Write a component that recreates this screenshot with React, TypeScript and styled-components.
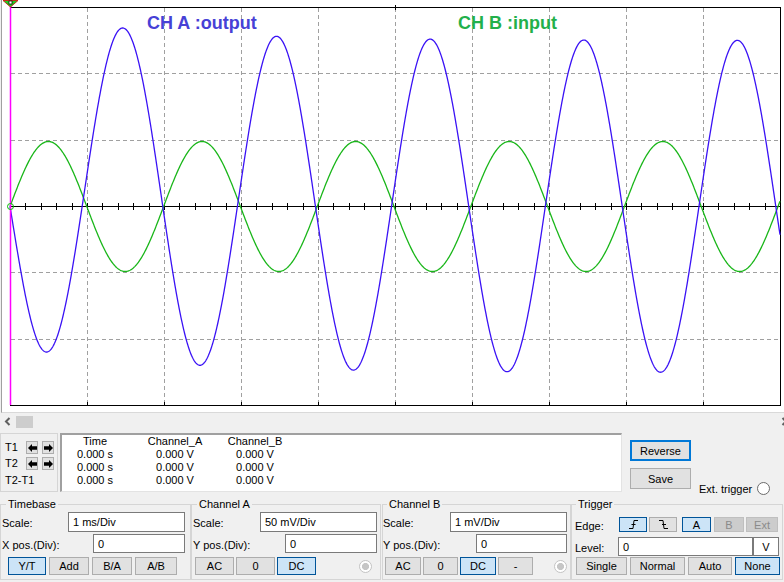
import React from "react";
import styled, { createGlobalStyle } from "styled-components";

const GlobalStyle = createGlobalStyle`
  html, body { margin: 0; padding: 0; background: #f0f0f0; }
  body {
    font-family: "Liberation Sans", Arial, sans-serif;
    font-size: 11px;
    color: #000;
  }
  * { box-sizing: border-box; }
`;

const FONT = `"Liberation Sans", Arial, sans-serif`;

const Window = styled.div`
  width: 784px;
  height: 582px;
  overflow: hidden;
  background: #f0f0f0;
  display: flex;
  flex-direction: column;
`;

/* ---------- scope screen ---------- */

const Screen = styled.div`
  position: relative;
  flex: none;
  height: 413px;
  margin-left: 1px;
  border-left: 1px solid #a0a0a0;
  border-bottom: 1px solid #d9d9d9;
  background: #ffffff;
`;

const ScopeSvg = styled.svg`
  display: block;
`;

const TraceLabel = styled.span<{ $left: number; $color: string }>`
  position: absolute;
  top: 14px;
  left: ${(p) => p.$left - 2}px;
  font: bold 18px/18px ${FONT};
  color: ${(p) => p.$color};
  white-space: nowrap;
`;

const PERIOD = 153.6;

function wavePath(fn: (x: number) => number): string {
  const parts: string[] = [];
  for (let x = 10; x <= 780.001; x += 0.5) {
    parts.push(`${parts.length ? "L" : "M"}${x.toFixed(1)} ${fn(x).toFixed(2)}`);
  }
  return parts.join(" ");
}

const greenWave = (x: number) =>
  206.5 - 65 * Math.sin((2 * Math.PI * (x - 10)) / PERIOD);

const blueWave = (x: number) => {
  const t = x - 10;
  const th = (2 * Math.PI * t) / PERIOD;
  const off = 28 * Math.exp(-t / 140) - 13 * Math.exp(-t / 15);
  return 206.5 - (-166 * Math.sin(th + 0.09) + off);
};

const GREEN_PATH = wavePath(greenWave);
const BLUE_PATH = wavePath(blueWave);

function Scope() {
  const vx = Array.from({ length: 9 }, (_, i) => 10.5 + 77 * (i + 1));
  const hy = [73, 140, 272, 339].map((v) => v + 0.5);
  const ticks = Array.from({ length: 51 }, (_, i) => Math.round(10 + 15.4 * i) + 0.5);
  return (
    <ScopeSvg width={782} height={412} viewBox="2 0 782 412">
      <g stroke="#a0a0a0" strokeDasharray="4 3" shapeRendering="crispEdges">
        {vx.map((x) => (
          <line key={x} x1={x} y1={8} x2={x} y2={405} />
        ))}
        {hy.map((y) => (
          <line key={y} x1={11} y1={y} x2={780} y2={y} />
        ))}
      </g>
      <g stroke="#000" fill="none" shapeRendering="crispEdges">
        <rect x={10.5} y={7.5} width={770} height={398} />
        <line x1={10} y1={206.5} x2={780} y2={206.5} />
        {ticks.map((x) => (
          <line key={x} x1={x} y1={203} x2={x} y2={210} />
        ))}
        {vx.map((x) => (
          <line key={"b" + x} x1={x} y1={402} x2={x} y2={405} />
        ))}
        <line x1={395.5} y1={5} x2={395.5} y2={10} />
      </g>
      <path d={GREEN_PATH} stroke="#19b619" strokeWidth={1.3} fill="none" />
      <path d={BLUE_PATH} stroke="#3a12f5" strokeWidth={1.3} fill="none" />
      <line x1={10.5} y1={5} x2={10.5} y2={405} stroke="#ff00ff" strokeWidth={1.5} />
      <circle cx={10.5} cy={206.5} r={3} stroke="#00c000" strokeWidth={1} fill="none" />
      <polygon points="3,0.5 18,0.5 10.5,7" fill="#22cc22" stroke="#d00000" strokeWidth={0.8} />
      <rect x={9} y={1} width={3} height={3} fill="#fff" stroke="#000" strokeWidth={0.7} />
    </ScopeSvg>
  );
}

/* ---------- scrollbar ---------- */

const ScrollBar = styled.div`
  flex: none;
  height: 18px;
  display: flex;
  align-items: center;
  padding-left: 4px;
`;

const ScrollArrow = styled.svg<{ $end?: boolean }>`
  flex: none;
  display: block;
  margin-right: ${(p) => (p.$end ? "-4px" : "0")};
`;

const ScrollThumb = styled.div`
  flex: none;
  width: 17px;
  height: 12px;
  margin-left: 5px;
  background: #cdcdcd;
`;

const ScrollTrack = styled.div`
  flex: 1;
`;

/* ---------- readout ---------- */

const Readout = styled.div`
  flex: none;
  height: 62px;
  margin-top: 2px;
  display: flex;
  align-items: flex-start;
`;

const CursorPanel = styled.div`
  flex: none;
  width: 58px;
  height: 59px;
  border: 1px solid #d5d5d5;
  padding: 7px 0 0 4px;
  display: flex;
  flex-direction: column;
`;

const CursorRow = styled.div<{ $mt?: number }>`
  display: flex;
  align-items: center;
  height: 13px;
  margin-top: ${(p) => p.$mt ?? 0}px;
`;

const CursorLabel = styled.span`
  width: 21px;
  line-height: 13px;
  white-space: nowrap;
`;

const ArrowButton = styled.div`
  flex: none;
  width: 12px;
  height: 13px;
  border: 1px solid #adadad;
  background: #e1e1e1;
  display: flex;
  align-items: center;
  justify-content: center;
  & + & {
    margin-left: 4px;
  }
`;

const ReadoutTable = styled.div`
  flex: none;
  width: 562px;
  height: 59px;
  margin-left: 2px;
  background: #fff;
  border: 1px solid #e3e3e3;
  border-top: 2px solid #a0a0a0;
  border-left: 2px solid #a0a0a0;
  display: grid;
  grid-template-columns: 66px 94px 66px;
  grid-auto-rows: 13px;
  align-content: start;
  justify-items: center;
  line-height: 13px;
  white-space: nowrap;
`;

const ButtonColumn = styled.div`
  flex: none;
  margin-left: 8px;
  padding-top: 7px;
  display: flex;
  flex-direction: column;
  gap: 7px;
`;

const PushButton = styled.div<{ $focused?: boolean }>`
  width: 61px;
  height: 21px;
  display: flex;
  align-items: center;
  justify-content: center;
  background: #e1e1e1;
  border: ${(p) => (p.$focused ? "2px solid #0078d7" : "1px solid #adadad")};
`;

const ExtTrigger = styled.div`
  flex: none;
  align-self: flex-end;
  margin-left: 8px;
  display: flex;
  align-items: center;
  gap: 5px;
  white-space: nowrap;
`;

const RadioCircle = styled.span<{ $disabled?: boolean; $mr?: number }>`
  flex: none;
  display: block;
  width: 13px;
  height: 13px;
  border-radius: 50%;
  margin-right: ${(p) => p.$mr ?? 0}px;
  border: 1px solid ${(p) => (p.$disabled ? "#c4c4c4" : "#6b6b6b")};
  background: ${(p) =>
    p.$disabled ? "radial-gradient(circle, #c6c6c6 0 3.3px, #ffffff 3.8px)" : "#ffffff"};
`;

/* ---------- control groups ---------- */

const Controls = styled.div`
  flex: none;
  display: flex;
  margin-top: 3px;
`;

const Group = styled.fieldset<{ $w: number; $ml?: number; $pl: number; $pr: number }>`
  flex: none;
  min-width: 0;
  width: ${(p) => p.$w}px;
  height: 82px;
  margin: 0 0 0 ${(p) => p.$ml ?? 0}px;
  padding: 0 ${(p) => p.$pr}px 0 ${(p) => p.$pl}px;
  border: 1px solid #d5d5d5;
`;

const Legend = styled.legend<{ $ml: number }>`
  padding: 0 2px;
  margin-left: ${(p) => p.$ml}px;
  line-height: 13px;
`;

const FieldRow = styled.div<{ $h: number; $mt: number }>`
  display: flex;
  align-items: center;
  height: ${(p) => p.$h}px;
  margin-top: ${(p) => p.$mt}px;
`;

const FieldLabel = styled.span<{ $w?: number }>`
  flex: ${(p) => (p.$w ? "none" : "1")};
  width: ${(p) => (p.$w ? `${p.$w}px` : "auto")};
  padding-top: 2px;
  white-space: nowrap;
`;

const TextBox = styled.div<{ $w: number; $center?: boolean }>`
  flex: none;
  width: ${(p) => p.$w}px;
  height: 100%;
  border: 1px solid #7a7a7a;
  background: #fff;
  padding-left: ${(p) => (p.$center ? 0 : 4)}px;
  display: flex;
  align-items: center;
  justify-content: ${(p) => (p.$center ? "center" : "flex-start")};
  white-space: nowrap;
`;

const ButtonRow = styled.div<{ $pl: number; $gap: number; $mt: number; $h: number }>`
  display: flex;
  align-items: center;
  height: ${(p) => p.$h}px;
  margin-top: ${(p) => p.$mt}px;
  padding-left: ${(p) => p.$pl}px;
  gap: ${(p) => p.$gap}px;
`;

type BtnState = "normal" | "on" | "off";

const ToggleButton = styled.div<{ $w: number; $state?: BtnState; $ml?: number }>`
  flex: none;
  width: ${(p) => p.$w}px;
  height: 100%;
  margin-left: ${(p) => p.$ml ?? 0}px;
  display: flex;
  align-items: center;
  justify-content: center;
  white-space: nowrap;
  background: ${(p) =>
    p.$state === "on" ? "#cce4f7" : p.$state === "off" ? "#cccccc" : "#e1e1e1"};
  border: 1px solid
    ${(p) => (p.$state === "on" ? "#005499" : p.$state === "off" ? "#bfbfbf" : "#adadad")};
  color: ${(p) => (p.$state === "off" ? "#8a8a8a" : "#000")};
`;

const Spacer = styled.div`
  flex: 1;
`;

/* ---------- icons ---------- */

const ArrowIcon = ({ dir }: { dir: "left" | "right" }) => (
  <svg width="9" height="8" viewBox="0 0 9 8" style={dir === "right" ? { transform: "scaleX(-1)" } : undefined}>
    <polygon points="0,4 4,0 4,2.3 9,2.3 9,5.7 4,5.7 4,8" fill="#000" />
  </svg>
);

const EdgeIcon = ({ rising }: { rising: boolean }) => (
  <svg width="11" height="9" viewBox="0 0 11 9">
    <g stroke="#000" strokeWidth="1" fill="none">
      {rising ? (
        <>
          <path d="M1 8.5 H5 L6 0.5 H10" />
          <path d="M3.5 4.5 H7.5" />
        </>
      ) : (
        <>
          <path d="M1 0.5 H5 L6 8.5 H10" />
          <path d="M4 4.5 H8" />
        </>
      )}
    </g>
  </svg>
);

const Chevron = ({ right }: { right?: boolean }) => (
  <svg width="7" height="9" viewBox="0 0 7 9">
    <path
      d={right ? "M1.5 1 L5 4.5 L1.5 8" : "M5.5 1 L2 4.5 L5.5 8"}
      stroke="#606060"
      strokeWidth="2"
      fill="none"
    />
  </svg>
);

/* ---------- app ---------- */

export default function App() {
  return (
    <>
      <GlobalStyle />
      <Window>
        <Screen>
          <Scope />
          <TraceLabel $left={147} $color="#4741d6">
            CH A :output
          </TraceLabel>
          <TraceLabel $left={458} $color="#22b04b">
            CH B :input
          </TraceLabel>
        </Screen>

        <ScrollBar>
          <ScrollArrow as="div">
            <Chevron />
          </ScrollArrow>
          <ScrollThumb />
          <ScrollTrack />
          <ScrollArrow as="div" $end>
            <Chevron right />
          </ScrollArrow>
        </ScrollBar>

        <Readout>
          <CursorPanel>
            <CursorRow>
              <CursorLabel>T1</CursorLabel>
              <ArrowButton>
                <ArrowIcon dir="left" />
              </ArrowButton>
              <ArrowButton>
                <ArrowIcon dir="right" />
              </ArrowButton>
            </CursorRow>
            <CursorRow $mt={3}>
              <CursorLabel>T2</CursorLabel>
              <ArrowButton>
                <ArrowIcon dir="left" />
              </ArrowButton>
              <ArrowButton>
                <ArrowIcon dir="right" />
              </ArrowButton>
            </CursorRow>
            <CursorRow $mt={4}>
              <CursorLabel>T2-T1</CursorLabel>
            </CursorRow>
          </CursorPanel>

          <ReadoutTable>
            <span>Time</span>
            <span>Channel_A</span>
            <span>Channel_B</span>
            <span>0.000 s</span>
            <span>0.000 V</span>
            <span>0.000 V</span>
            <span>0.000 s</span>
            <span>0.000 V</span>
            <span>0.000 V</span>
            <span>0.000 s</span>
            <span>0.000 V</span>
            <span>0.000 V</span>
          </ReadoutTable>

          <ButtonColumn>
            <PushButton $focused>Reverse</PushButton>
            <PushButton>Save</PushButton>
          </ButtonColumn>

          <ExtTrigger>
            <span>Ext. trigger</span>
            <RadioCircle />
          </ExtTrigger>
        </Readout>

        <Controls>
          <Group $w={191} $pl={1} $pr={5}>
            <Legend $ml={4}>Timebase</Legend>
            <FieldRow $h={20} $mt={1}>
              <FieldLabel>Scale:</FieldLabel>
              <TextBox $w={117}>1 ms/Div</TextBox>
            </FieldRow>
            <FieldRow $h={19} $mt={2}>
              <FieldLabel>X pos.(Div):</FieldLabel>
              <TextBox $w={92}>0</TextBox>
            </FieldRow>
            <ButtonRow $pl={6} $gap={3} $mt={4} $h={18}>
              <ToggleButton $w={38} $state="on">Y/T</ToggleButton>
              <ToggleButton $w={40}>Add</ToggleButton>
              <ToggleButton $w={40}>B/A</ToggleButton>
              <ToggleButton $w={42}>A/B</ToggleButton>
            </ButtonRow>
          </Group>

          <Group $w={190} $pl={1} $pr={3}>
            <Legend $ml={4}>Channel A</Legend>
            <FieldRow $h={20} $mt={1}>
              <FieldLabel>Scale:</FieldLabel>
              <TextBox $w={117}>50 mV/Div</TextBox>
            </FieldRow>
            <FieldRow $h={19} $mt={2}>
              <FieldLabel>Y pos.(Div):</FieldLabel>
              <TextBox $w={92}>0</TextBox>
            </FieldRow>
            <ButtonRow $pl={2} $gap={2} $mt={4} $h={18}>
              <ToggleButton $w={39}>AC</ToggleButton>
              <ToggleButton $w={39}>0</ToggleButton>
              <ToggleButton $w={39} $state="on">DC</ToggleButton>
              <Spacer />
              <RadioCircle $disabled $mr={5} />
            </ButtonRow>
          </Group>

          <Group $w={189} $ml={1} $pl={0} $pr={3}>
            <Legend $ml={4}>Channel B</Legend>
            <FieldRow $h={20} $mt={1}>
              <FieldLabel>Scale:</FieldLabel>
              <TextBox $w={117}>1 mV/Div</TextBox>
            </FieldRow>
            <FieldRow $h={19} $mt={2}>
              <FieldLabel>Y pos.(Div):</FieldLabel>
              <TextBox $w={91}>0</TextBox>
            </FieldRow>
            <ButtonRow $pl={2} $gap={2} $mt={4} $h={18}>
              <ToggleButton $w={36}>AC</ToggleButton>
              <ToggleButton $w={35}>0</ToggleButton>
              <ToggleButton $w={36} $state="on">DC</ToggleButton>
              <ToggleButton $w={35}>-</ToggleButton>
              <Spacer />
              <RadioCircle $disabled />
            </ButtonRow>
          </Group>

          <Group $w={212} $pl={3} $pr={3}>
            <Legend $ml={1}>Trigger</Legend>
            <FieldRow $h={15} $mt={6}>
              <FieldLabel $w={44}>Edge:</FieldLabel>
              <ToggleButton $w={28} $state="on">
                <EdgeIcon rising />
              </ToggleButton>
              <ToggleButton $w={28} $ml={2}>
                <EdgeIcon rising={false} />
              </ToggleButton>
              <ToggleButton $w={29} $ml={5} $state="on">
                A
              </ToggleButton>
              <ToggleButton $w={30} $ml={3} $state="off">
                B
              </ToggleButton>
              <ToggleButton $w={32} $ml={2} $state="off">
                Ext
              </ToggleButton>
            </FieldRow>
            <FieldRow $h={19} $mt={5}>
              <FieldLabel $w={43}>Level:</FieldLabel>
              <TextBox $w={135}>0</TextBox>
              <TextBox $w={26} $center>
                V
              </TextBox>
            </FieldRow>
            <ButtonRow $pl={1} $gap={3} $mt={1} $h={18}>
              <ToggleButton $w={51}>Single</ToggleButton>
              <ToggleButton $w={55}>Normal</ToggleButton>
              <ToggleButton $w={44}>Auto</ToggleButton>
              <ToggleButton $w={45} $state="on">None</ToggleButton>
            </ButtonRow>
          </Group>
        </Controls>
      </Window>
    </>
  );
}
